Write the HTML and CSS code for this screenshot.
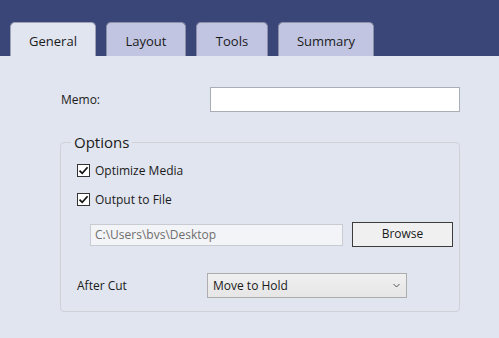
FILE: index.html
```html
<!DOCTYPE html>
<html>
<head>
  <title>Settings</title>
  <link rel="stylesheet" href="styles.css">
</head>
<body>
  <div class="tabbar">
    <div class="tab active">General</div>
    <div class="tab tab-layout">Layout</div>
    <div class="tab tab-tools">Tools</div>
    <div class="tab tab-summary">Summary</div>
  </div>

  <div class="page">
    <div class="memo-row">
      <label class="memo-label">Memo:</label>
      <div class="textbox memo-box"></div>
    </div>

    <fieldset class="options">
      <legend>Options</legend>

      <div class="check-row first">
        <span class="check">
          <svg width="11" height="11" viewBox="0 0 11 11"><path d="M1.5 5.6 L4.2 8.3 L9.6 2.2" fill="none" stroke="#111" stroke-width="1.7"/></svg>
        </span>
        <span>Optimize Media</span>
      </div>

      <div class="check-row">
        <span class="check">
          <svg width="11" height="11" viewBox="0 0 11 11"><path d="M1.5 5.6 L4.2 8.3 L9.6 2.2" fill="none" stroke="#111" stroke-width="1.7"/></svg>
        </span>
        <span>Output to File</span>
      </div>

      <div class="path-row">
        <div class="path-box">C:\Users\bvs\Desktop</div>
        <div class="browse">Browse</div>
      </div>

      <div class="cut-row">
        <label class="cut-label">After Cut</label>
        <div class="select">
          <span>Move to Hold</span>
          <svg width="7" height="5" viewBox="0 0 7 5"><path d="M0.5 1 L3.5 4 L6.5 1" fill="none" stroke="#555" stroke-width="1"/></svg>
        </div>
      </div>
    </fieldset>
  </div>
</body>
</html>
```

FILE: styles.css
```css
body {
  margin: 0;
  width: 499px;
  height: 338px;
  overflow: hidden;
  background-color: #e1e5ef;
  font-family: "Segoe UI", "Open Sans", sans-serif;
  font-size: 12px;
  color: #1a1a1a;
}

.tabbar {
  height: 56px;
  background-color: #3b4678;
  display: flex;
  align-items: flex-end;
  padding-left: 10px;
  gap: 10px;
  box-sizing: border-box;
}

.tab {
  height: 34px;
  box-sizing: border-box;
  background-color: #c1c5e2;
  border: 1px solid #8c90a8;
  border-bottom: none;
  border-radius: 5px 5px 0 0;
  font-size: 13px;
  text-align: center;
  line-height: 36px;
  color: #1a1a1a;
}

.tab.active {
  width: 86px;
  background-color: #e1e5ef;
  border-color: #9ea2b6;
}

.tab-layout {
  width: 80px;
}

.tab-tools {
  width: 72px;
}

.tab-summary {
  width: 96px;
}

.page {
  padding-top: 31px;
}

.memo-row {
  display: flex;
  align-items: center;
  height: 24px;
}

.memo-label {
  width: 149px;
  padding-left: 61px;
}

.textbox {
  background-color: #fff;
  border: 1px solid #a9adb6;
  box-sizing: border-box;
}

.memo-box {
  width: 250px;
  height: 25px;
}

.options {
  margin: 21px 0 0 60px;
  padding: 0 0 0 16px;
  width: 400px;
  height: 180px;
  box-sizing: border-box;
  border: 1px solid #cfd1d6;
  border-radius: 4px;
}

.options legend {
  margin-left: -6px;
  padding: 0 3px;
  font-size: 15px;
  line-height: 20px;
}

.check-row {
  display: flex;
  align-items: center;
  gap: 5px;
  height: 20px;
  margin-top: 9px;
}

.check-row.first {
  margin-top: 8px;
}

.check {
  width: 13px;
  height: 13px;
  box-sizing: border-box;
  border: 1px solid #333;
  background-color: #fff;
  display: flex;
  align-items: center;
  justify-content: center;
}

.path-row {
  display: flex;
  align-items: center;
  margin-top: 13px;
  padding-left: 13px;
}

.path-box {
  width: 253px;
  height: 22px;
  box-sizing: border-box;
  background-color: #f3f4f7;
  border: 1px solid #c8cbd2;
  color: #6e6e6e;
  padding-left: 4px;
  line-height: 20px;
}

.browse {
  width: 101px;
  height: 25px;
  margin-left: 9px;
  box-sizing: border-box;
  background-color: #f0f0f0;
  border: 1px solid #3c3c3c;
  text-align: center;
  line-height: 22px;
}

.cut-row {
  display: flex;
  align-items: center;
  margin-top: 26px;
}

.cut-label {
  width: 130px;
}

.select {
  width: 200px;
  height: 25px;
  box-sizing: border-box;
  border: 1px solid #adadad;
  background: linear-gradient(#f0f0f0, #e6e6e6);
  display: flex;
  align-items: center;
  justify-content: space-between;
  padding: 0 6px 0 5px;
}
```
